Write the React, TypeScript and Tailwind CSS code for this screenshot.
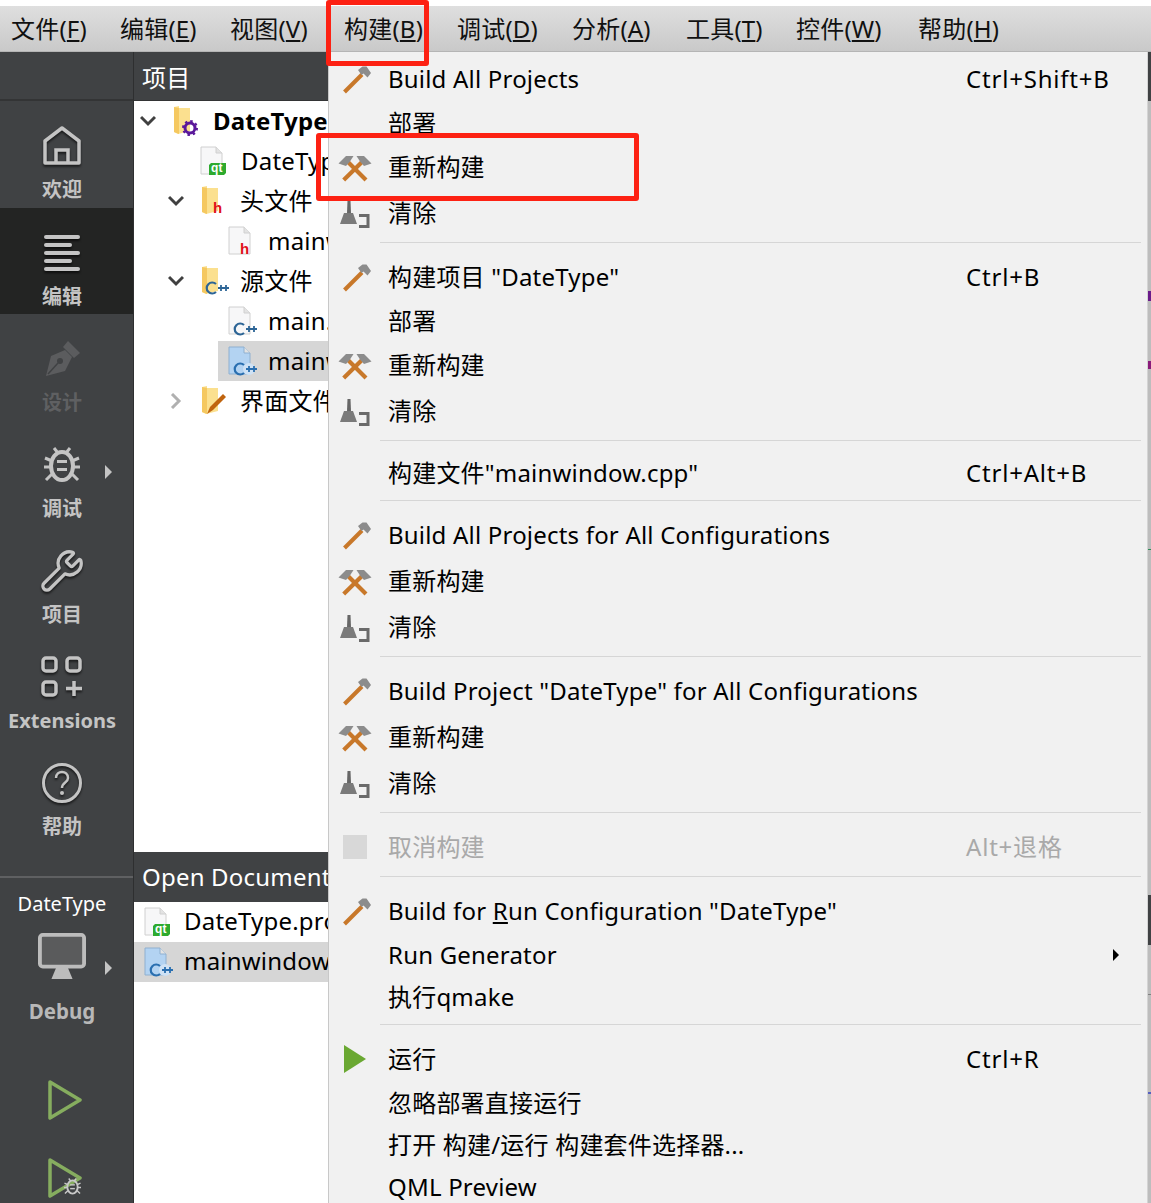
import React from "react";
import { Wrench } from "lucide-react";

const FONT = { fontFamily: '"Noto Sans", "Noto Sans CJK SC", sans-serif' };

function Hammer() {
  return (
    <svg width="34" height="34" viewBox="0 0 34 34">
      <path d="M6.500 30 L24 12.500" stroke="#c8782a" strokeWidth="4" fill="none" />
      <path d="M20 8 L24.500 4.500 L28.500 4.500 L33 11 L29.500 15.500 L25.500 11.500 L23.500 13 Z" fill="#8c8c8c" />
    </svg>
  );
}
function Hammers() {
  return (
    <svg width="34" height="34" viewBox="0 0 34 34">
      <path d="M5.700 30 L25 11 M28 30 L9 11" stroke="#c8782a" strokeWidth="4.200" fill="none" />
      <path d="M0.500 13.500 L8 6 L15.500 6 L12 11.500 L8 16 Z" fill="#8c8c8c" />
      <path d="M33.500 13.500 L26 6 L18.500 6 L22 11.500 L26 16 Z" fill="#8c8c8c" />
    </svg>
  );
}
function Broom() {
  return (
    <svg width="34" height="34" viewBox="0 0 34 34">
      <path d="M9.500 5 L12.500 5 L13 17 L9 17 Z" fill="#666666" />
      <path d="M2 28 L6 17 L15 17 L19 28 Z" fill="#7a7a7a" />
      <path d="M21 19.500 L30 19.500 L30 30.500 L21 30.500" stroke="#6a6a6a" strokeWidth="3" fill="none" />
    </svg>
  );
}

function Row({
  h,
  icon,
  label,
  short,
  disabled,
  arrow,
  up,
}: {
  h: string;
  icon?: React.ReactNode;
  label: React.ReactNode;
  short?: string;
  disabled?: boolean;
  arrow?: boolean;
  up?: boolean;
}) {
  return (
    <div className={`flex items-center ${h} ${disabled ? "text-[#a9a9a9]" : "text-black"}`}>
      <div className="w-[59px] flex items-center justify-center pr-[8px] shrink-0">{icon}</div>
      <div className={`flex-1 whitespace-nowrap ${up ? "pb-[1px]" : ""}`}>{label}</div>
      {short && <div className="w-[181px] shrink-0 whitespace-nowrap tracking-[0.8px] pb-[1px]">{short}</div>}
      {arrow && (
        <div className="w-[34px] shrink-0">
          <div className="w-0 h-0 border-y-[6px] border-y-transparent border-l-[6px] border-l-black" />
        </div>
      )}
    </div>
  );
}

function Sep({ h }: { h: string }) {
  return (
    <div className={`${h} ml-[51px] mr-[6px]`}>
      <div className="h-[1px] bg-[#d6d6d6]" />
    </div>
  );
}

function ModeIcon({ name }: { name: string }) {
  const c = "#c4c4c4";
  const cls = "drop-shadow-[0_2px_1px_rgba(0,0,0,0.6)]";
  if (name === "home")
    return (
      <svg width="38" height="40" viewBox="0 0 38 40" className={cls}>
        <path d="M2 15 L19 2 L36 15 L36 37 L2 37 Z" fill="none" stroke={c} strokeWidth="3.500" strokeLinejoin="round" />
        <path d="M13 36 L13 24 L25 24 L25 36" fill="none" stroke={c} strokeWidth="3.500" />
      </svg>
    );
  if (name === "edit")
    return (
      <svg width="36" height="38" viewBox="0 0 36 38" className={cls}>
        {[3, 11, 19, 27, 35].map((y, i) => (
          <rect key={y} x="0" y={y - 2} width={i % 2 ? 28 : 36} height="4" rx="2" fill={c} />
        ))}
      </svg>
    );
  if (name === "pen")
    return (
      <svg width="38" height="38" viewBox="0 0 38 38">
        <path d="M3 36 L8 16 L22 10 L29 17 L22 31 Z" fill="#5b5c5e" />
        <path d="M20 7 L25 1 L37 13 L31 18 Z" fill="#5b5c5e" />
        <circle cx="17" cy="21" r="3" fill="#404244" />
        <path d="M5 34 L15 23" stroke="#404244" strokeWidth="1.500" />
      </svg>
    );
  if (name === "bug") return <Bug c={c} size={36} />;
  if (name === "wrench")
    return <Wrench size={46} strokeWidth={1.7} color={c} className={cls} />;
  if (name === "ext")
    return (
      <svg width="42" height="42" viewBox="0 0 42 42" className={cls}>
        <rect x="2" y="2" width="13" height="13" rx="3" fill="none" stroke={c} strokeWidth="3.500" />
        <rect x="26" y="2" width="13" height="13" rx="3" fill="none" stroke={c} strokeWidth="3.500" />
        <rect x="2" y="26" width="13" height="13" rx="3" fill="none" stroke={c} strokeWidth="3.500" />
        <path d="M25 32.500 L41 32.500 M33 25 L33 40" stroke={c} strokeWidth="3.500" />
      </svg>
    );
  return (
    <svg width="42" height="42" viewBox="0 0 42 42" className={cls}>
      <circle cx="21" cy="21" r="18.500" fill="none" stroke={c} strokeWidth="3" />
      <path d="M15 16 C15 8 27 8 27 16 C27 21 21 20 21 26" fill="none" stroke={c} strokeWidth="2.500" />
      <circle cx="21" cy="31" r="2" fill={c} />
    </svg>
  );
}

function Bug({ c, size }: { c: string; size: number }) {
  return (
    <svg width={size} height={size} viewBox="0 0 36 36">
      <path d="M10 1 L14 6 M26 1 L22 6" stroke={c} strokeWidth="3" />
      <path d="M1 11 L8 14 M35 11 L28 14 M0 20 L7 20 M36 20 L29 20 M2 33 L8 27 M34 33 L28 27" stroke={c} strokeWidth="3" />
      <ellipse cx="18" cy="19" rx="11" ry="14" fill="none" stroke={c} strokeWidth="4" />
      <rect x="13" y="13" width="10" height="3" fill={c} />
      <rect x="13" y="21" width="10" height="3" fill={c} />
    </svg>
  );
}

function Mode({
  icon,
  label,
  h,
  active,
  dim,
  arrow,
}: {
  icon: string;
  label: string;
  h: string;
  active?: boolean;
  dim?: boolean;
  arrow?: boolean;
}) {
  return (
    <div className={`relative flex flex-col items-center pt-[22px] pr-[9px] ${h} ${active ? "bg-[#232423]" : ""}`}>
      <div className="h-[46px] flex items-center justify-center">
        <ModeIcon name={icon} />
      </div>
      <div className={`font-bold mt-[8px] leading-[26px] whitespace-nowrap text-[20px] tracking-normal ${dim ? "text-[#5f6062]" : "text-[#c4c4c4]"}`}>
        {label}
      </div>
      {arrow && (
        <div className="absolute left-[105px] top-[45px] w-0 h-0 border-y-[7px] border-y-transparent border-l-[7px] border-l-[#c4c4c4]" />
      )}
    </div>
  );
}

function CppMark({ cx, cy, color }: { cx: number; cy: number; color: string }) {
  return (
    <g fill="none" stroke={color}>
      <path d={`M${cx + 4} ${cy - 4} A5.500 5.500 0 1 0 ${cx + 4} ${cy + 4}`} strokeWidth="2.200" />
      <path
        d={`M${cx + 6} ${cy} h6 M${cx + 9} ${cy - 3} v6 M${cx + 11} ${cy} h6 M${cx + 14} ${cy - 3} v6`}
        strokeWidth="1.800"
      />
    </g>
  );
}

function FileIcon({ kind, selected }: { kind: "qt" | "h" | "cpp"; selected?: boolean }) {
  return (
    <svg width="26" height="30" viewBox="0 0 26 30" className="overflow-visible">
      <path
        d="M1 1 L16 1 L22 7 L22 28 L1 28 Z"
        fill={selected ? "#b3d3f2" : "#f7f7f8"}
        stroke={selected ? "#8fb0d0" : "#d0d0d0"}
      />
      <path d="M16 1 L16 7 L22 7" fill="#e3e3e3" stroke={selected ? "#8fb0d0" : "#d0d0d0"} />
      {kind === "qt" && (
        <>
          <path d="M11 17 L26 17 L26 27 L24 29 L9 29 L9 19 Z" fill="#2eaa2e" />
          <text x="11" y="26" fontSize="12" fontWeight="700" fill="#fff" fontFamily="Liberation Sans">qt</text>
        </>
      )}
      {kind === "h" && <text x="12" y="28" fontSize="15" fontWeight="700" fill="#e0101a" fontFamily="Liberation Sans">h</text>}
      {kind === "cpp" && (
        <>
          {selected && <circle cx="21" cy="23" r="6" fill="#cfe2f5" />}
          <CppMark cx={12} cy={23} color={selected ? "#2a6fb0" : "#2d6596"} />
        </>
      )}
    </svg>
  );
}

function FolderIcon({ badge }: { badge: "gear" | "h" | "cpp" | "pen" }) {
  return (
    <svg width="30" height="32" viewBox="0 0 30 32" className="overflow-visible">
      <path d="M1 2 L6 1 L6 3 L17 3 L17 26 L5 29 L1 27 Z" fill="#fbe08f" />
      <path d="M1 2 L6 3 L6 29 L1 27 Z" fill="#f5c860" />
      {badge === "gear" && (
        <g>
          <circle cx="17" cy="23" r="5" fill="none" stroke="#5a189a" strokeWidth="3" />
          <circle cx="17" cy="23" r="7" fill="none" stroke="#5a189a" strokeWidth="2" strokeDasharray="2.500 3" />
        </g>
      )}
      {badge === "h" && <text x="12" y="28" fontSize="15" fontWeight="700" fill="#e0101a" fontFamily="Liberation Sans">h</text>}
      {badge === "cpp" && <CppMark cx={11} cy={23} color="#2d6596" />}
      {badge === "pen" && <path d="M6 29 L9 22 L22 9 L25 12 L12 25 Z" fill="#c0640e" />}
    </svg>
  );
}

function Chevron({ open, dim }: { open?: boolean; dim?: boolean }) {
  return (
    <svg width="16" height="16" viewBox="0 0 16 16">
      <path
        d={open ? "M1 4 L8 11 L15 4" : "M4 1 L11 8 L4 15"}
        fill="none"
        stroke={dim ? "#b0b0b0" : "#404040"}
        strokeWidth="3"
      />
    </svg>
  );
}

function TreeRow({
  indent,
  chev,
  icon,
  text,
  bold,
  sel,
  gap,
  doc,
}: {
  indent: string;
  chev?: React.ReactNode;
  icon: React.ReactNode;
  text: string;
  bold?: boolean;
  sel?: boolean;
  gap: string;
  doc?: boolean;
}) {
  return (
    <div className={`h-[40px] flex items-center ${indent} ${sel ? "bg-[#d6d6d6]" : ""} whitespace-nowrap overflow-hidden`}>
      {chev && <div className="w-[28px] flex shrink-0">{chev}</div>}
      <div className={`shrink-0 flex items-center ${gap}`}>{icon}</div>
      <span className={`${doc ? "pb-[2px]" : ""} ${bold ? "font-bold" : ""}`}>{text}</span>
    </div>
  );
}

const MENUS = [
  ["文件(", "F", ")"],
  ["编辑(", "E", ")"],
  ["视图(", "V", ")"],
  ["构建(", "B", ")"],
  ["调试(", "D", ")"],
  ["分析(", "A", ")"],
  ["工具(", "T", ")"],
  ["控件(", "W", ")"],
  ["帮助(", "H", ")"],
];
const MENU_W = ["w-[109px]", "w-[110px]", "w-[114px]", "w-[113px]", "w-[115px]", "w-[114px]", "w-[110px]", "w-[122px]", "w-[110px]"];

export default function App() {
  return (
    <div className="relative w-[1151px] h-[1203px] overflow-hidden bg-white text-[24px] tracking-[0.2px] leading-none" style={FONT}>
      <div className="h-[6px] bg-white" />
      <div className="h-[46px] flex items-center pl-[11px] bg-gradient-to-b from-[#dfdfdf] to-[#c9c9c9] border-b border-b-[#b5b5b5] text-[#111]">
        {MENUS.map((m, i) => (
          <div key={m[1]} className={`${MENU_W[i]} shrink-0 whitespace-nowrap`}>
            {m[0]}
            <span className="underline">{m[1]}</span>
            {m[2]}
          </div>
        ))}
      </div>

      <div className="flex h-[1151px]">
        {/* mode bar */}
        <div className="w-[133px] bg-[#404244] flex flex-col shrink-0">
          <div className="h-[49px] border-b-[2px] border-b-[#333435]" />
          <Mode icon="home" label="欢迎" h="h-[107px]" />
          <Mode icon="edit" label="编辑" h="h-[106px]" active />
          <Mode icon="pen" label="设计" h="h-[106px]" dim />
          <Mode icon="bug" label="调试" h="h-[106px]" arrow />
          <Mode icon="wrench" label="项目" h="h-[106px]" />
          <Mode icon="ext" label="Extensions" h="h-[106px]" />
          <Mode icon="help" label="帮助" h="h-[106px]" />
          <div className="h-[2px] mt-[32px] bg-[#5f6062]" />
          <div className="text-white text-[20px] tracking-normal text-center pr-[9px] mt-[17px] leading-[18px]">DateType</div>
          <div className="relative flex justify-center pr-[9px] mt-[20px]">
            <svg width="48" height="48" viewBox="0 0 50 50">
              <rect x="2" y="2" width="46" height="33" rx="3" fill="#5a5b5c" stroke="#bcbcbc" strokeWidth="4" />
              <path d="M19 36 L31 36 L36 48 L14 48 Z" fill="#bcbcbc" />
            </svg>
            <div className="absolute left-[105px] top-[28px] w-0 h-0 border-y-[7px] border-y-transparent border-l-[7px] border-l-[#c4c4c4]" />
          </div>
          <div className="text-[#b8b8b8] font-bold text-[20.500px] tracking-normal text-center pr-[9px] mt-[18px] leading-[24px]">Debug</div>
          <div className="flex justify-center pr-[4px] mt-[57px]">
            <svg width="34" height="40" viewBox="0 0 34 40">
              <path d="M2 2 L32 20 L2 38 Z" fill="none" stroke="#86ad5f" strokeWidth="3.500" strokeLinejoin="round" />
            </svg>
          </div>
          <div className="relative flex justify-center pr-[4px] mt-[38px]">
            <svg width="34" height="40" viewBox="0 0 34 40">
              <path d="M2 2 L32 20 L2 38 Z" fill="none" stroke="#86ad5f" strokeWidth="3.500" strokeLinejoin="round" />
            </svg>
            <div className="absolute left-[64px] top-[20px]">
              <Bug c="#c8c8c8" size={17} />
            </div>
          </div>
        </div>
        <div className="w-[1px] bg-[#2e2f30]" />

        {/* side panels */}
        <div className="w-[194px] flex flex-col shrink-0 text-black">
          <div className="h-[49px] bg-[#404244] border-b-[1px] border-b-[#333435] flex items-center pl-[8px] pt-[3px] text-white">项目</div>
          <div className="h-[751px] overflow-hidden">
            <TreeRow indent="pl-[6px]" chev={<Chevron open />} icon={<FolderIcon badge="gear" />} gap="mr-[10px] ml-[5px]" text="DateType.pro" bold />
            <TreeRow indent="pl-[66px]" icon={<FileIcon kind="qt" />} gap="mr-[15px]" text="DateType.pro" />
            <TreeRow indent="pl-[34px]" chev={<Chevron open />} icon={<FolderIcon badge="h" />} gap="ml-[5px] mr-[9px]" text="头文件" />
            <TreeRow indent="pl-[94px]" icon={<FileIcon kind="h" />} gap="mr-[14px]" text="mainwindow.h" />
            <TreeRow indent="pl-[34px]" chev={<Chevron open />} icon={<FolderIcon badge="cpp" />} gap="ml-[5px] mr-[9px]" text="源文件" />
            <TreeRow indent="pl-[94px]" icon={<FileIcon kind="cpp" />} gap="mr-[14px]" text="main.cpp" />
            <TreeRow indent="pl-[10px] ml-[84px]" icon={<FileIcon kind="cpp" selected />} gap="mr-[14px]" text="mainwindow.cpp" sel />
            <TreeRow indent="pl-[34px]" chev={<Chevron dim />} icon={<FolderIcon badge="pen" />} gap="ml-[5px] mr-[9px]" text="界面文件" />
          </div>
          <div className="h-[50px] bg-[#404244] flex items-center pl-[8px] text-white whitespace-nowrap overflow-hidden">Open Documents</div>
          <TreeRow indent="pl-[10px]" icon={<FileIcon kind="qt" />} gap="mr-[14px]" text="DateType.pro" doc />
          <TreeRow indent="pl-[10px]" icon={<FileIcon kind="cpp" selected />} gap="mr-[14px]" text="mainwindow.cpp" sel doc />
        </div>
      </div>

      {/* open dropdown menu */}
      <div className="absolute left-[328px] top-[52px] w-[820px] h-[1151px] bg-[#f1f1f1] border-l border-l-[#c8c8c8] border-r border-r-[#d4d4d4] pt-[5px] overflow-hidden text-black">
        <Row h="h-[44px]" icon={<Hammer />} label="Build All Projects" short="Ctrl+Shift+B" up />
        <Row h="h-[44px]" label="部署" />
        <Row h="h-[44px]" icon={<Hammers />} label="重新构建" />
        <Row h="h-[48px]" icon={<Broom />} label="清除" />
        <Sep h="h-[18px] pt-[5px]" />
        <Row h="h-[44px]" icon={<Hammer />} label='构建项目 "DateType"' short="Ctrl+B" />
        <Row h="h-[44px]" label="部署" />
        <Row h="h-[44px]" icon={<Hammers />} label="重新构建" />
        <Row h="h-[48px]" icon={<Broom />} label="清除" />
        <Sep h="h-[16px] pt-[5px]" />
        <Row h="h-[44px]" label='构建文件"mainwindow.cpp"' short="Ctrl+Alt+B" />
        <Sep h="h-[18px] pt-[5px]" />
        <Row h="h-[44px]" icon={<Hammer />} label="Build All Projects for All Configurations" up />
        <Row h="h-[48px]" icon={<Hammers />} label="重新构建" />
        <Row h="h-[44px]" icon={<Broom />} label="清除" />
        <Sep h="h-[20px] pt-[7px]" />
        <Row h="h-[44px]" icon={<Hammer />} label='Build Project "DateType" for All Configurations' up />
        <Row h="h-[48px]" icon={<Hammers />} label="重新构建" />
        <Row h="h-[44px]" icon={<Broom />} label="清除" />
        <Sep h="h-[20px] pt-[7px]" />
        <Row h="h-[44px]" disabled icon={<div className="w-[24px] h-[24px] bg-[#d8d8d8]" />} label="取消构建" short="Alt+退格" />
        <Sep h="h-[20px] pt-[7px]" />
        <Row
          h="h-[44px]"
          up
          icon={<Hammer />}
          label={
            <>
              Build for <span className="underline">R</span>un Configuration "DateType"
            </>
          }
        />
        <Row h="h-[44px]" label="Run Generator" arrow up />
        <Row h="h-[40px]" label="执行qmake" up />
        <Sep h="h-[20px] pt-[7px]" />
        <Row
          h="h-[44px]"
          icon={
            <svg width="24" height="28" viewBox="0 0 24 28">
              <path d="M1 0 L23 14 L1 28 Z" fill="#6aa832" />
            </svg>
          }
          label="运行"
          short="Ctrl+R"
        />
        <Row h="h-[44px]" label="忽略部署直接运行" />
        <Row h="h-[40px]" label="打开 构建/运行 构建套件选择器..." />
        <Row h="h-[44px]" label="QML Preview" up />
      </div>

      {/* sliver of the window behind the menu */}
      <div className="absolute left-[1148px] top-[52px] w-[3px] h-[1151px] flex flex-col bg-[#bdbdbd]">
        <div className="h-[49px] bg-[#404244]" />
        <div className="h-[2px] mt-[190px] bg-[#6a1b8a]" />
        <div className="h-[8px] bg-[#6a1b8a]" />
        <div className="h-[8px] mt-[60px] bg-[#8a1b7a]" />
        <div className="h-[1px] mt-[180px] bg-[#2e8b57]" />
        <div className="h-[50px] mt-[345px] bg-[#404244]" />
        <div className="h-[1px] mt-[49px] bg-[#808080]" />
        <div className="h-[2px] mt-[97px] bg-[#5560c0]" />
      </div>

      {/* red annotation boxes */}
      <div className="absolute left-[326px] top-0 w-[103px] h-[66px] border-[5px] border-[#fd2113] rounded-[3px]" />
      <div className="absolute left-[316px] top-[133px] w-[323px] h-[68px] border-[5px] border-[#fd2113] rounded-[3px]" />
    </div>
  );
}
